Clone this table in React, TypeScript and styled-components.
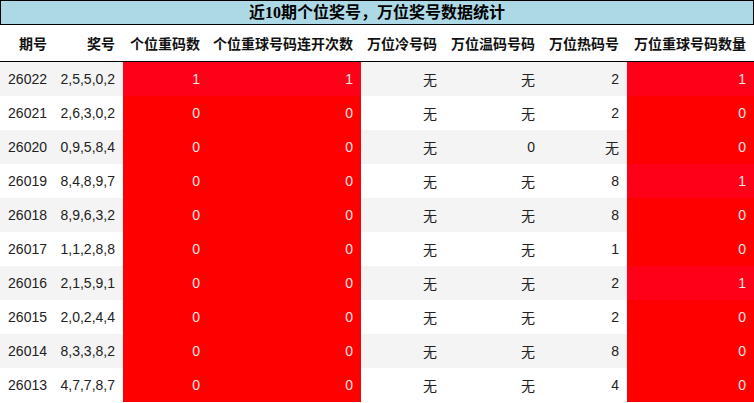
import React from 'react';
import styled, { createGlobalStyle } from 'styled-components';

const GlobalStyle = createGlobalStyle`
  html, body {
    margin: 0;
    padding: 0;
    background: #fff;
  }
  body {
    font-family: "Liberation Sans", "Noto Sans CJK SC", sans-serif;
    color: #222;
  }
`;

const Wrap = styled.div`
  width: 754px;
`;

const Title = styled.div`
  height: 23px;
  line-height: 23px;
  background: #add8e6;
  border: 1px solid #000;
  text-align: center;
  font-family: "Liberation Serif", "Noto Sans CJK SC", serif;
  font-weight: bold;
  font-size: 16px;
  color: #000;
`;

const Table = styled.table`
  width: 754px;
  border-collapse: collapse;
  table-layout: fixed;
`;

const Th = styled.th<{ $w: number }>`
  width: ${({ $w }) => $w - 8}px;
  height: 36px;
  padding: 0 8px 0 0;
  text-align: right;
  font-size: 14px;
  font-weight: bold;
  color: #111;
  white-space: nowrap;
  border-bottom: 1px solid #000;
  font-family: "Noto Sans CJK SC", "Liberation Sans", sans-serif;
`;

const Row = styled.tr<{ $alt: boolean }>`
  background: ${({ $alt }) => ($alt ? '#f4f4f4' : '#fff')};
`;

const Td = styled.td<{ $hot?: 'one' | 'zero' }>`
  height: 34px;
  padding: 0 8px 0 0;
  text-align: right;
  font-size: 14px;
  white-space: nowrap;
  background: ${({ $hot }) =>
    $hot === 'one' ? '#ff0019' : $hot === 'zero' ? '#ff0000' : 'transparent'};
  color: ${({ $hot }) => ($hot ? '#ffe4e4' : '#222')};
`;

const headers: [string, number][] = [
  ['期号', 55],
  ['奖号', 68],
  ['个位重码数', 85],
  ['个位重球号码连开次数', 153],
  ['万位冷号码', 84],
  ['万位温码号码', 98],
  ['万位热码号', 84],
  ['万位重球号码数量', 127],
];

type Rec = {
  issue: string;
  nums: string;
  rep: number;
  streak: number;
  cold: string;
  warm: string;
  hot: string;
  wanRep: number;
};

const rows: Rec[] = [
  { issue: '26022', nums: '2,5,5,0,2', rep: 1, streak: 1, cold: '无', warm: '无', hot: '2', wanRep: 1 },
  { issue: '26021', nums: '2,6,3,0,2', rep: 0, streak: 0, cold: '无', warm: '无', hot: '2', wanRep: 0 },
  { issue: '26020', nums: '0,9,5,8,4', rep: 0, streak: 0, cold: '无', warm: '0', hot: '无', wanRep: 0 },
  { issue: '26019', nums: '8,4,8,9,7', rep: 0, streak: 0, cold: '无', warm: '无', hot: '8', wanRep: 1 },
  { issue: '26018', nums: '8,9,6,3,2', rep: 0, streak: 0, cold: '无', warm: '无', hot: '8', wanRep: 0 },
  { issue: '26017', nums: '1,1,2,8,8', rep: 0, streak: 0, cold: '无', warm: '无', hot: '1', wanRep: 0 },
  { issue: '26016', nums: '2,1,5,9,1', rep: 0, streak: 0, cold: '无', warm: '无', hot: '2', wanRep: 1 },
  { issue: '26015', nums: '2,0,2,4,4', rep: 0, streak: 0, cold: '无', warm: '无', hot: '2', wanRep: 0 },
  { issue: '26014', nums: '8,3,3,8,2', rep: 0, streak: 0, cold: '无', warm: '无', hot: '8', wanRep: 0 },
  { issue: '26013', nums: '4,7,7,8,7', rep: 0, streak: 0, cold: '无', warm: '无', hot: '4', wanRep: 0 },
];

const heat = (n: number) => (n > 0 ? 'one' : 'zero');

const App: React.FC = () => (
  <>
    <GlobalStyle />
    <Wrap>
      <Title>近10期个位奖号，万位奖号数据统计</Title>
      <Table>
        <thead>
          <tr>
            {headers.map(([h, w]) => (
              <Th key={h} $w={w}>{h}</Th>
            ))}
          </tr>
        </thead>
        <tbody>
          {rows.map((r, i) => (
            <Row key={r.issue} $alt={i % 2 === 0}>
              <Td>{r.issue}</Td>
              <Td>{r.nums}</Td>
              <Td $hot={heat(r.rep)}>{r.rep}</Td>
              <Td $hot={heat(r.streak)}>{r.streak}</Td>
              <Td>{r.cold}</Td>
              <Td>{r.warm}</Td>
              <Td>{r.hot}</Td>
              <Td $hot={heat(r.wanRep)}>{r.wanRep}</Td>
            </Row>
          ))}
        </tbody>
      </Table>
    </Wrap>
  </>
);

export default App;
